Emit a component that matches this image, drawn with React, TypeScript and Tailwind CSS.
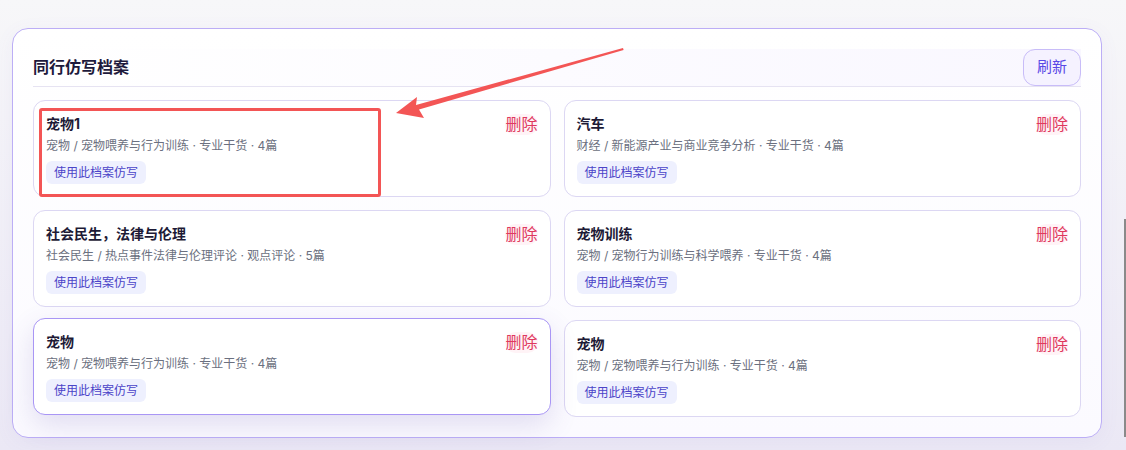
import React from 'react'

type Profile = {
  id: string
  name: string
  meta: string
  hovered?: boolean
}

const profiles: Profile[] = [
  { id: '1', name: '宠物1', meta: '宠物 / 宠物喂养与行为训练 · 专业干货 · 4篇' },
  { id: '2', name: '汽车', meta: '财经 / 新能源产业与商业竞争分析 · 专业干货 · 4篇' },
  { id: '3', name: '社会民生，法律与伦理', meta: '社会民生 / 热点事件法律与伦理评论 · 观点评论 · 5篇' },
  { id: '4', name: '宠物训练', meta: '宠物 / 宠物行为训练与科学喂养 · 专业干货 · 4篇' },
  { id: '5', name: '宠物', meta: '宠物 / 宠物喂养与行为训练 · 专业干货 · 4篇', hovered: true },
  { id: '6', name: '宠物', meta: '宠物 / 宠物喂养与行为训练 · 专业干货 · 4篇' },
]

function ProfileCard({ profile }: { profile: Profile }) {
  return (
    <div
      className={
        profile.hovered
          ? 'flex h-[97px] justify-between rounded-[12px] border border-[#a996f5] bg-white px-[12px] pt-[13px] -translate-y-[2px] shadow-[0_10px_28px_rgba(90,70,170,0.16)]'
          : 'flex h-[97px] justify-between rounded-[12px] border border-[#dcd7f3] bg-white px-[12px] pt-[13px]'
      }
    >
      <div className="flex flex-col items-start">
        <div className="text-[14px] leading-[20px] font-bold text-[#1d1a36]">{profile.name}</div>
        <div className="mt-[3px] text-[12px] leading-[18px] text-[#6b7080]">{profile.meta}</div>
        <button className="mt-[6px] h-[23px] rounded-[6px] bg-[#eef0fe] px-[8px] text-[12px] leading-[23px] text-[#4b44c8]">
          使用此档案仿写
        </button>
      </div>
      <button className="h-[21px] self-start rounded-full bg-[#fff3f6] text-[16px] leading-[21px] text-[#e0395f]">
        删除
      </button>
    </div>
  )
}

export default function App() {
  return (
    <div
      className="relative h-[450px] w-[1126px] overflow-hidden bg-gradient-to-b from-[#f7f7f9] to-[#ebe8f5] pt-[28px] pl-[12px]"
      style={{ fontFamily: 'Inter, "Noto Sans CJK SC", sans-serif' }}
    >
      <div className="w-[1090px] rounded-[16px] border border-[#bcaef6] bg-gradient-to-b from-white to-[#fbfaff] p-[20px] shadow-[0_4px_20px_rgba(120,100,200,0.06)]">
        {/* 头部 */}
        <div className="flex h-[38px] items-center justify-between border-b border-[#e6e3f2] bg-gradient-to-r from-white to-[#f9f7ff]">
          <h2 className="-mt-[1px] text-[16px] font-bold text-[#1e1a3c]">同行仿写档案</h2>
          <button className="mb-[1px] h-[37px] w-[58px] rounded-[12px] border border-[#c8bcf8] bg-[#f5f2ff] text-[15px] text-[#5a48e6]">
            刷新
          </button>
        </div>

        <div className="mt-[13px] grid grid-cols-2 gap-[13px]">
          {profiles.map((p) => (
            <ProfileCard key={p.id} profile={p} />
          ))}
        </div>
      </div>

      {/* 标注 */}
      <div className="pointer-events-none absolute left-[39px] top-[108px] h-[89px] w-[342px] rounded-[3px] border-[3px] border-[#f35555]" />
      <svg className="pointer-events-none absolute left-0 top-0" width="1126" height="450" viewBox="0 0 1126 450">
        <polygon
          points="396,113 417,97 416,105 623,48 623.6,50 419,109.5 424,118"
          fill="#f35555"
        />
      </svg>

      {/* 滚动条 */}
      <div className="absolute right-0 top-[219px] h-[218px] w-[2px] bg-[#8a8a8a]" />
    </div>
  )
}
